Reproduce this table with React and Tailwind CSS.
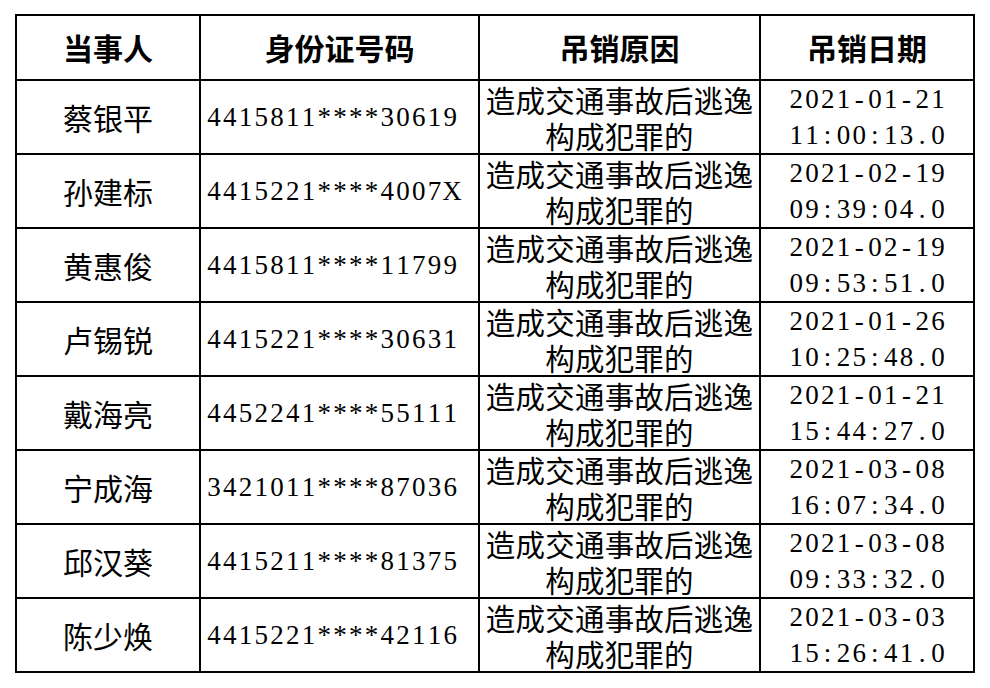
import React from "react";

// Revocation records
const ROWS = [
  ["蔡银平", "4415811****30619", "2021-01-21", "11:00:13.0"],
  ["孙建标", "4415221****4007X", "2021-02-19", "09:39:04.0"],
  ["黄惠俊", "4415811****11799", "2021-02-19", "09:53:51.0"],
  ["卢锡锐", "4415221****30631", "2021-01-26", "10:25:48.0"],
  ["戴海亮", "4452241****55111", "2021-01-21", "15:44:27.0"],
  ["宁成海", "3421011****87036", "2021-03-08", "16:07:34.0"],
  ["邱汉葵", "4415211****81375", "2021-03-08", "09:33:32.0"],
  ["陈少焕", "4415221****42116", "2021-03-03", "15:26:41.0"],
];

const CJK = { fontFamily: '"Noto Sans CJK SC", "Noto Sans", sans-serif' };

// SimSun-like fixed-width digits: each char in its own half-em box
function Digits({ text }) {
  return (
    <span className="inline-flex text-[27px] leading-[36px]" style={{ fontFamily: '"Liberation Serif", serif' }}>
      {text.split("").map((c, i) => (
        <span key={i} className="inline-block w-[15.75px] text-center">
          {c}
        </span>
      ))}
    </span>
  );
}

export default function App() {
  const head = ["当事人", "身份证号码", "吊销原因", "吊销日期"];
  return (
    <div className="w-[990px] h-[688px] bg-white pt-[14px] pl-[15px]" style={CJK}>
      <div className="inline-grid grid-cols-[182px_277px_279px_212px] grid-rows-[63px_repeat(8,72px)] gap-[2px] p-[2px] bg-black text-black">
        {head.map((h) => (
          <div key={h} className="bg-white flex items-center justify-center text-[30px] font-bold">
            {h}
          </div>
        ))}
        {ROWS.map(([name, id, d, t]) => (
          <React.Fragment key={id}>
            <div className="bg-white flex items-center justify-center text-[30px]">{name}</div>
            <div className="bg-white flex items-center pl-[5px]">
              <Digits text={id} />
            </div>
            <div className="bg-white flex flex-col items-center justify-center text-[29.5px] leading-[36px] tracking-[0.2px]">
              <span>造成交通事故后逃逸</span>
              <span>构成犯罪的</span>
            </div>
            <div className="bg-white flex flex-col items-center justify-center">
              <Digits text={d} />
              <Digits text={t} />
            </div>
          </React.Fragment>
        ))}
      </div>
    </div>
  );
}
